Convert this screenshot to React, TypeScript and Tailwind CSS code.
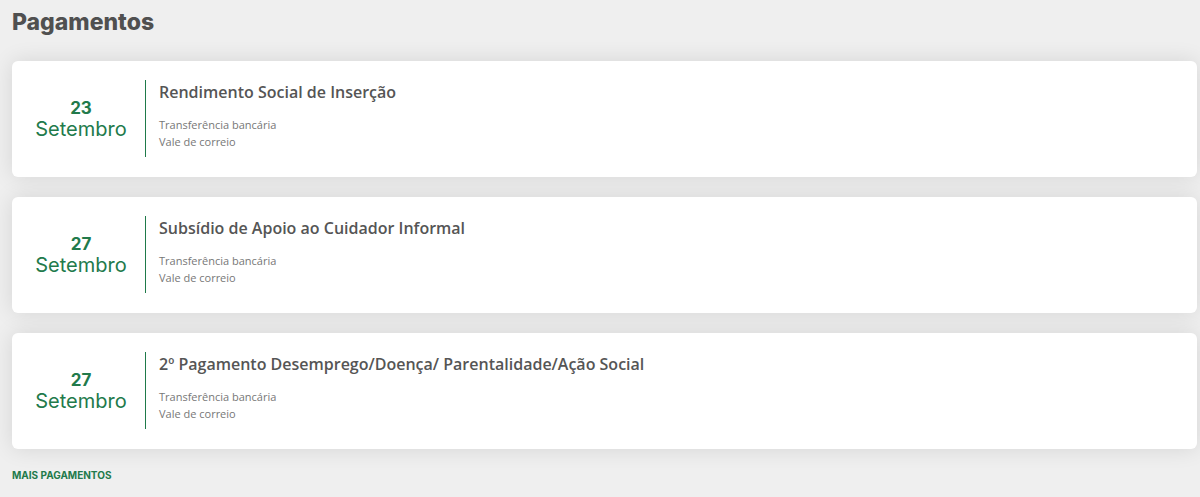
const payments = [
  { day: "23", month: "Setembro", title: "Rendimento Social de Inserção" },
  { day: "27", month: "Setembro", title: "Subsídio de Apoio ao Cuidador Informal" },
  { day: "27", month: "Setembro", title: "2º Pagamento Desemprego/Doença/ Parentalidade/Ação Social" },
];

function PaymentCard({ day, month, title }: { day: string; month: string; title: string }) {
  return (
    <div className="flex rounded-[6px] bg-white pt-[19px] pb-[20px] shadow-[0_0_22px_rgba(0,0,0,0.11)]">
      <div className="flex w-[133px] shrink-0 flex-col items-center justify-center pl-[5px] font-['Inter',sans-serif] text-[#227a4b]">
        <span className="text-[17px] leading-[20px] font-bold">{day}</span>
        <span className="text-[20px] leading-[22px]">{month}</span>
      </div>
      <div className="h-[77px] w-px bg-[#1f7a4a]" />
      <div className="flex flex-col pl-[13px] font-['Open_Sans',sans-serif]">
        <h3 className="mt-[1px] text-[16px] leading-[22px] font-semibold text-[#555]">{title}</h3>
        <p className="mt-[13px] text-[11px] leading-[17px] text-[#777]">Transferência bancária</p>
        <p className="text-[11px] leading-[17px] text-[#777]">Vale de correio</p>
      </div>
    </div>
  );
}

export default function App() {
  return (
    <div className="min-h-[497px] w-[1200px] bg-[#efefef] px-[12px] pt-[6px] pr-[3px]">
      <h1 className="font-['Inter',sans-serif] text-[23px] leading-[32px] font-extrabold text-[#505050]">
        Pagamentos
      </h1>
      <div className="mt-[23px] flex flex-col gap-[20px]">
        {payments.map((p, i) => (
          <PaymentCard key={i} {...p} />
        ))}
      </div>
      <a className="mt-[19px] block font-['Inter',sans-serif] text-[10px] leading-[14px] font-bold text-[#227a4b]">
        MAIS PAGAMENTOS
      </a>
    </div>
  );
}
